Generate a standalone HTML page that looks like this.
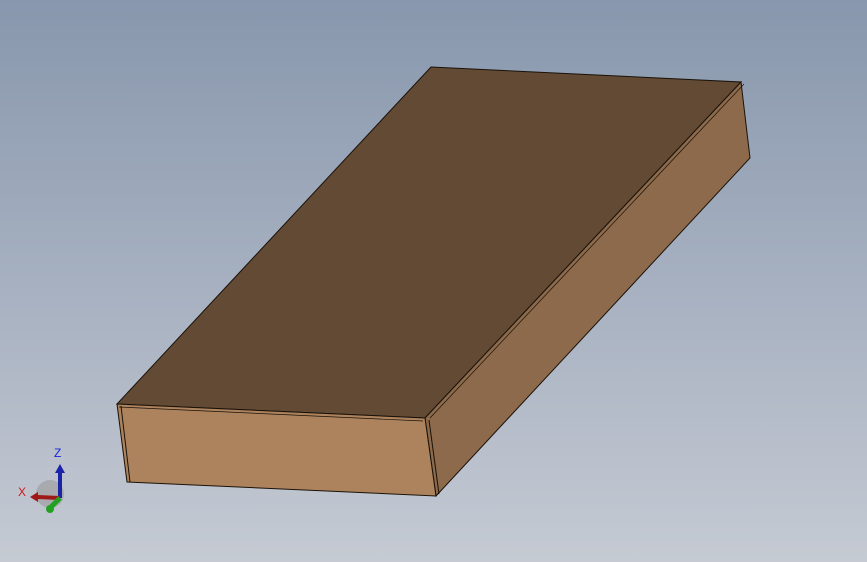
<!DOCTYPE html>
<html><head><style>
html,body{margin:0;padding:0;width:867px;height:562px;overflow:hidden}
body{background:linear-gradient(to bottom,#8897ad 0%,#a6b0c0 50%,#c5cad3 100%)}
svg{position:absolute;left:0;top:0}
</style></head><body>
<svg width="867" height="562" viewBox="0 0 867 562">
<polygon points="117,404 431,67 741,82 425,418" fill="#634a34" stroke="#1a1209" stroke-width="1"/>
<polygon points="741,82 750,158 436,496 425,418" fill="#8c6a4b" stroke="#1a1209" stroke-width="1"/>
<polygon points="117,404 425,418 436,496 127,482" fill="#ad835e" stroke="#1a1209" stroke-width="1"/>
<line x1="121" y1="406" x2="130" y2="482" stroke="#1a1209" stroke-width="1"/>
<line x1="429" y1="420" x2="439" y2="494" stroke="#1a1209" stroke-width="1"/>
<line x1="119" y1="407" x2="423" y2="421" stroke="#1a1209" stroke-width="0.7"/>
<line x1="430" y1="418" x2="744" y2="84" stroke="#1a1209" stroke-width="0.7"/>
<!-- triad -->
<circle cx="50" cy="494" r="14" fill="#9a9a9a" opacity="0.6"/>
<line x1="60" y1="498" x2="60" y2="472" stroke="#1b23a8" stroke-width="4"/>
<polygon points="55,473 65,473 60,464" fill="#1b23a8"/>
<line x1="60" y1="498" x2="38" y2="497" stroke="#a01818" stroke-width="4"/>
<polygon points="38,492 38,502 30,497" fill="#a01818"/>
<line x1="60" y1="498" x2="50" y2="508" stroke="#22a022" stroke-width="5"/>
<circle cx="50" cy="509" r="4" fill="#22a022"/>
<text x="54" y="457" font-family="Liberation Sans,sans-serif" font-size="12" fill="#1b23d8">Z</text>
<text x="18" y="496" font-family="Liberation Sans,sans-serif" font-size="12" fill="#d01818">X</text>
</svg>
</body></html>
